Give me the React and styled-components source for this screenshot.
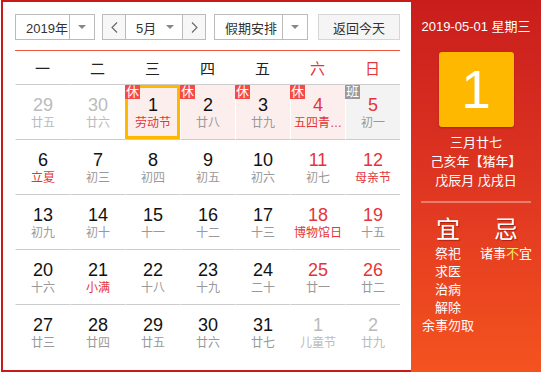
import React from 'react';
import styled, {createGlobalStyle} from 'styled-components';

const GlobalStyle = createGlobalStyle`
  body {
    margin: 0;
    background: #fff;
    font-family: "Liberation Sans", "Noto Sans CJK SC", sans-serif;
  }
`;

const colors = {
    border: '#c71a1a',
    red: '#e33539',
    text: '#222',
    lunar: '#999',
    faded: '#bbb',
    line: '#ccc',
    rest: '#fdeeee',
    work: '#f3f3f3',
    yellow: '#ffb800',
};

const Wrapper = styled.div`
  display: flex;
  width: 540px;
  height: 372px;
  margin-left: 1px;
`;

const Main = styled.div`
  width: 385px;
  padding: 12px 11px 11px 12px;
  border: 2px solid ${colors.border};
  border-right: none;
`;

const Toolbar = styled.div`
  display: flex;
  height: 26px;
  font-size: 13px;
  color: #333;
`;

const Select = styled.div`
  display: flex;
  width: ${p => p.$width}px;
  margin-right: ${p => p.$gap || 0}px;
  box-sizing: border-box;
  border: 1px solid #bbb;
  background: #fff;
`;

const SelectText = styled.div`
  flex: 1;
  display: flex;
  align-items: center;
  padding-left: 10px;
`;

const ArrowBox = styled.div`
  width: 24px;
  display: flex;
  align-items: center;
  justify-content: center;
  border-left: ${p => p.$divider ? '1px solid #bbb' : 'none'};
`;

const Triangle = styled.span`
  width: 0;
  height: 0;
  border-left: 4px solid transparent;
  border-right: 4px solid transparent;
  border-top: 4px solid #888;
`;

const StepButton = styled.div`
  width: 22px;
  display: flex;
  align-items: center;
  justify-content: center;
  background: #f7f7f7;
  border-${p => p.$side}: 1px solid #bbb;
`;

const TodayButton = styled.div`
  width: 82px;
  box-sizing: border-box;
  display: flex;
  align-items: center;
  justify-content: center;
  border: 1px solid #d6d6d6;
  background: #f5f5f5;
`;

const RedLine = styled.div`
  height: 1px;
  margin-top: 10px;
  background: #f0553d;
`;

const Grid = styled.div`
  display: grid;
  grid-template-columns: repeat(7, 55px);
`;

const WeekDay = styled.div`
  height: 33px;
  display: flex;
  align-items: center;
  justify-content: center;
  font-size: 15px;
  color: ${p => p.$weekend ? colors.red : colors.text};
`;

const Cell = styled.div`
  position: relative;
  border-top: 1px solid ${colors.line};
  border-left: 1px solid #fff;
  display: flex;
  flex-direction: column;
  align-items: center;
  padding-top: 10px;
  height: 44px;
  background: ${p => p.$kind === 'rest' ? colors.rest : p.$kind === 'work' ? colors.work : 'transparent'};
`;

const Selected = styled.div`
  position: absolute;
  left: -1px;
  top: 0;
  right: 0;
  bottom: 0;
  border: 3px solid ${colors.yellow};
`;

const Badge = styled.span`
  position: absolute;
  left: -1px;
  top: 0;
  width: 15px;
  height: 14px;
  line-height: 14px;
  text-align: center;
  font-size: 13px;
  color: #fff;
  background: ${p => p.$work ? '#999' : '#f54b47'};
  z-index: 1;
`;

const DayNum = styled.div`
  font-size: 18px;
  line-height: 20px;
  color: ${p => p.$color};
`;

const Lunar = styled.div`
  font-size: 12px;
  line-height: 16px;
  white-space: nowrap;
  color: ${p => p.$color};
`;

const Side = styled.div`
  width: 130px;
  height: 372px;
  background: linear-gradient(to bottom, #c91d1c 0%, #df3622 50%, #f4531f 100%);
  color: #fff;
  display: flex;
  flex-direction: column;
  align-items: center;
  padding-top: 18px;
  box-sizing: border-box;
`;

const DateLine = styled.div`
  font-size: 13px;
  line-height: 18px;
`;

const BigDay = styled.div`
  width: 75px;
  height: 75px;
  margin-top: 16px;
  border-radius: 3px;
  background: ${colors.yellow};
  box-shadow: 0 1px 2px rgba(0, 0, 0, 0.25);
  display: flex;
  align-items: center;
  justify-content: center;
  font-size: 53px;
`;

const LunarInfo = styled.div`
  margin-top: 6px;
  font-size: 13px;
  line-height: 19px;
  text-align: center;
`;

const Divider = styled.div`
  width: 110px;
  height: 2px;
  margin-top: 11px;
  background: rgba(255, 255, 255, 0.35);
`;

const Almanac = styled.div`
  display: flex;
  width: 130px;
  padding: 0 6px 0 8px;
  box-sizing: border-box;
  margin-top: 12px;
`;

const AlmanacCol = styled.div`
  width: 58px;
  display: flex;
  flex-direction: column;
  align-items: center;
  font-size: 13px;
  line-height: 18px;
`;

const AlmanacHead = styled.div`
  font-size: 24px;
  line-height: 30px;
  text-shadow: 1px 1px 1px rgba(120, 0, 0, 0.5);
`;

const Mark = styled.span`
  color: #ffe066;
`;

const weeks = [
    [
        {d: 29, l: '廿五', other: true},
        {d: 30, l: '廿六', other: true},
        {d: 1, l: '劳动节', fest: true, kind: 'rest', badge: '休', selected: true},
        {d: 2, l: '廿八', kind: 'rest', badge: '休'},
        {d: 3, l: '廿九', kind: 'rest', badge: '休'},
        {d: 4, l: '五四青…', fest: true, kind: 'rest', badge: '休'},
        {d: 5, l: '初一', kind: 'work', badge: '班'},
    ],
    [
        {d: 6, l: '立夏', fest: true},
        {d: 7, l: '初三'},
        {d: 8, l: '初四'},
        {d: 9, l: '初五'},
        {d: 10, l: '初六'},
        {d: 11, l: '初七'},
        {d: 12, l: '母亲节', fest: true},
    ],
    [
        {d: 13, l: '初九'},
        {d: 14, l: '初十'},
        {d: 15, l: '十一'},
        {d: 16, l: '十二'},
        {d: 17, l: '十三'},
        {d: 18, l: '博物馆日', fest: true},
        {d: 19, l: '十五'},
    ],
    [
        {d: 20, l: '十六'},
        {d: 21, l: '小满', fest: true},
        {d: 22, l: '十八'},
        {d: 23, l: '十九'},
        {d: 24, l: '二十'},
        {d: 25, l: '廿一'},
        {d: 26, l: '廿二'},
    ],
    [
        {d: 27, l: '廿三'},
        {d: 28, l: '廿四'},
        {d: 29, l: '廿五'},
        {d: 30, l: '廿六'},
        {d: 31, l: '廿七'},
        {d: 1, l: '儿童节', other: true},
        {d: 2, l: '廿九', other: true},
    ],
];

const weekNames = ['一', '二', '三', '四', '五', '六', '日'];

const Chevron = ({left}) => (
    <svg width="7" height="11" viewBox="0 0 7 11">
        <path d={left ? 'M6 0.5 L1 5.5 L6 10.5' : 'M1 0.5 L6 5.5 L1 10.5'} fill="none" stroke="#666" strokeWidth="1.1"/>
    </svg>
);

const DayCell = ({day, col}) => {
    const weekend = col >= 5;
    const numColor = day.other ? colors.faded : weekend ? colors.red : '#111';
    const lunarColor = day.other ? colors.faded : day.fest ? colors.red : colors.lunar;
    return (
        <Cell $kind={day.kind}>
            {day.badge && <Badge $work={day.badge === '班'}>{day.badge}</Badge>}
            {day.selected && <Selected/>}
            <DayNum $color={numColor}>{day.d}</DayNum>
            <Lunar $color={lunarColor}>{day.l}</Lunar>
        </Cell>
    );
};

export default function App() {
    return (
        <Wrapper>
            <GlobalStyle/>
            <Main>
                <Toolbar>
                    <Select $width={80} $gap={7}>
                        <SelectText>2019年</SelectText>
                        <ArrowBox $divider><Triangle/></ArrowBox>
                    </Select>
                    <Select $width={104} $gap={8}>
                        <StepButton $side="right"><Chevron left/></StepButton>
                        <SelectText>5月</SelectText>
                        <ArrowBox><Triangle/></ArrowBox>
                        <StepButton $side="left"><Chevron/></StepButton>
                    </Select>
                    <Select $width={94} $gap={10}>
                        <SelectText>假期安排</SelectText>
                        <ArrowBox $divider><Triangle/></ArrowBox>
                    </Select>
                    <TodayButton>返回今天</TodayButton>
                </Toolbar>
                <RedLine/>
                <Grid>
                    {weekNames.map((w, i) => (
                        <WeekDay key={w} $weekend={i >= 5}>{w}</WeekDay>
                    ))}
                    {weeks.map((week, r) => week.map((day, c) => (
                        <DayCell key={`${r}-${c}`} day={day} col={c}/>
                    )))}
                </Grid>
            </Main>
            <Side>
                <DateLine>2019-05-01 星期三</DateLine>
                <BigDay>1</BigDay>
                <LunarInfo>
                    <div>三月廿七</div>
                    <div>己亥年【猪年】</div>
                    <div>戊辰月 戊戌日</div>
                </LunarInfo>
                <Divider/>
                <Almanac>
                    <AlmanacCol>
                        <AlmanacHead>宜</AlmanacHead>
                        <div>祭祀</div>
                        <div>求医</div>
                        <div>治病</div>
                        <div>解除</div>
                        <div>余事勿取</div>
                    </AlmanacCol>
                    <AlmanacCol>
                        <AlmanacHead>忌</AlmanacHead>
                        <div>诸事<Mark>不</Mark>宜</div>
                    </AlmanacCol>
                </Almanac>
            </Side>
        </Wrapper>
    );
}
